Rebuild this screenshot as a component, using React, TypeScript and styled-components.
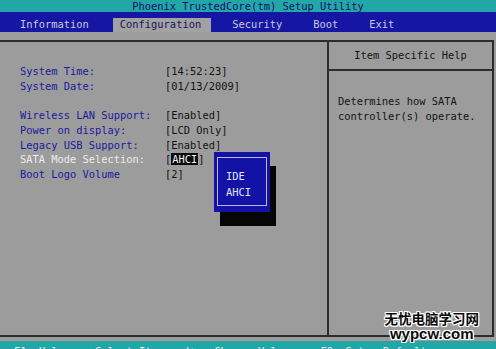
import * as React from 'react';
import styled, { createGlobalStyle } from 'styled-components';

const GlobalStyle = createGlobalStyle`
  html, body {
    margin: 0;
    padding: 0;
    background: #9c9c9c;
  }
`;

const Screen = styled.div`
  position: relative;
  width: 496px;
  height: 349px;
  overflow: hidden;
  display: flex;
  flex-direction: column;
  background: #9c9c9c;
  font-family: 'DejaVu Sans Mono', 'Liberation Mono', monospace;
  font-size: 10.4px;
`;

const TitleBar = styled.div`
  height: 12px;
  line-height: 12px;
  background: #22a6a6;
  color: #10106a;
  text-align: center;
  flex-shrink: 0;
`;

const MenuBar = styled.div`
  height: 20px;
  background: #1616a4;
  display: flex;
  align-items: flex-end;
  padding-left: 13px;
  flex-shrink: 0;
`;

const MenuItem = styled.div<{ active?: boolean }>`
  height: 14px;
  line-height: 13px;
  padding: 0 10px 0 7px;
  margin-right: 14px;
  color: ${p => (p.active ? '#14145e' : '#c9c9dc')};
  background: ${p => (p.active ? '#a2a2a2' : 'transparent')};
`;

const Body = styled.div`
  flex: 1;
  padding: 8px 2px 4px 0;
  display: flex;
  flex-direction: column;
`;

const Frame = styled.div`
  flex: 1;
  display: grid;
  grid-template-columns: 329px 1fr;
  border-top: 2px solid #2c2c2c;
  border-right: 2px solid #2c2c2c;
  border-bottom: 2px solid #2c2c2c;
`;

const SettingsPane = styled.div`
  position: relative;
  border-right: 2px solid #2c2c2c;
  padding: 22px 0 0 20px;
`;

const SettingsGrid = styled.div`
  display: grid;
  grid-template-columns: 145px auto;
  line-height: 14.7px;
`;

const Label = styled.div<{ selected?: boolean }>`
  color: ${p => (p.selected ? '#ececec' : '#1a1a9e')};
`;

const Value = styled.div`
  color: #121212;
`;

const Spacer = styled.div`
  grid-column: 1 / span 2;
  height: 14.7px;
`;

const Highlight = styled.span`
  background: #0a0a0a;
  color: #f0f0f0;
  padding: 0 1px;
`;

const Popup = styled.div`
  position: absolute;
  left: 214px;
  top: 110px;
  width: 56px;
  height: 60px;
  box-sizing: border-box;
  background: #1212a6;
  box-shadow: 6px 14px 0 #060606;
  padding: 5px 3px 6px 3px;
  display: flex;
`;

const PopupInner = styled.div`
  flex: 1;
  border: 1px solid #b8b8e0;
  padding: 10px 0 0 8px;
  line-height: 16px;
  color: #e4e4f4;
`;

const HelpPane = styled.div`
  display: flex;
  flex-direction: column;
`;

const HelpHeader = styled.div`
  height: 27px;
  line-height: 27px;
  text-align: center;
  color: #141414;
  border-bottom: 2px solid #2c2c2c;
`;

const HelpText = styled.div`
  padding: 23px 0 0 9px;
  line-height: 15px;
  color: #141414;
  white-space: pre;
`;

const StatusBar = styled.div`
  height: 8px;
  overflow: hidden;
  flex-shrink: 0;
  background: #22a6a6;
  color: #e8f4f4;
  padding: 3px 0 0 14px;
  box-sizing: border-box;
  white-space: pre;
  line-height: 14px;
`;

const Watermark = styled.div`
  position: absolute;
  right: 17px;
  bottom: 9px;
  display: flex;
  flex-direction: column;
  align-items: center;
  gap: 1px;
  color: #0a0a0a;
  font-family: 'Noto Sans CJK SC', 'Noto Sans', sans-serif;
  text-shadow: -1px -1px 0 #fff, 1px -1px 0 #fff, -1px 1px 0 #fff, 1px 1px 0 #fff,
    0 1px 0 #fff, 0 -1px 0 #fff, 1px 0 0 #fff, -1px 0 0 #fff;
`;

const WatermarkCn = styled.div`
  font-size: 13.5px;
  line-height: 15px;
  font-weight: 700;
`;

const WatermarkUrl = styled.div`
  font-family: 'Liberation Sans', Arial, sans-serif;
  font-size: 15px;
  line-height: 13px;
  font-weight: 700;
`;

const menu = [
  { label: 'Information' },
  { label: 'Configuration', active: true },
  { label: 'Security' },
  { label: 'Boot' },
  { label: 'Exit' },
];

const App: React.FC = () => {
  return (
    <>
      <GlobalStyle />
      <Screen>
        <TitleBar>Phoenix TrustedCore(tm) Setup Utility</TitleBar>
        <MenuBar>
          {menu.map(m => (
            <MenuItem key={m.label} active={m.active}>
              {m.label}
            </MenuItem>
          ))}
        </MenuBar>
        <Body>
          <Frame>
            <SettingsPane>
              <SettingsGrid>
                <Label>System Time:</Label>
                <Value>[14:52:23]</Value>
                <Label>System Date:</Label>
                <Value>[01/13/2009]</Value>
                <Spacer />
                <Label>Wireless LAN Support:</Label>
                <Value>[Enabled]</Value>
                <Label>Power on display:</Label>
                <Value>[LCD Only]</Value>
                <Label>Legacy USB Support:</Label>
                <Value>[Enabled]</Value>
                <Label selected>SATA Mode Selection:</Label>
                <Value>
                  [<Highlight>AHCI</Highlight>]
                </Value>
                <Label>Boot Logo Volume</Label>
                <Value>[2]</Value>
              </SettingsGrid>
              <Popup>
                <PopupInner>
                  <div>IDE</div>
                  <div>AHCI</div>
                </PopupInner>
              </Popup>
            </SettingsPane>
            <HelpPane>
              <HelpHeader>Item Specific Help</HelpHeader>
              <HelpText>{'Determines how SATA\ncontroller(s) operate.'}</HelpText>
            </HelpPane>
          </Frame>
        </Body>
        <StatusBar>{'F1  Help  \u2191\u2193 Select Item  -/+   Change Values    F9  Setup Defaults'}</StatusBar>
        <Watermark>
          <WatermarkCn>无忧电脑学习网</WatermarkCn>
          <WatermarkUrl>wypcw.com</WatermarkUrl>
        </Watermark>
      </Screen>
    </>
  );
};

export default App;
